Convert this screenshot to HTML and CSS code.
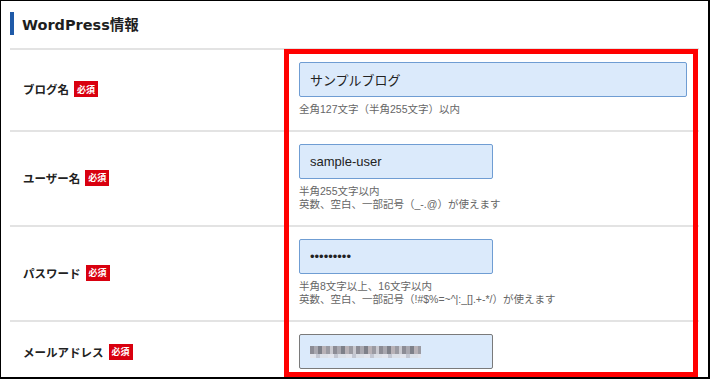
FILE: index.html
```html
<!DOCTYPE html>
<html lang="ja">
<head>
    <meta charset="UTF-8">
    <meta name="viewport" content="width=device-width, initial-scale=1.0">
    <title>WordPress情報</title>
    <link rel="stylesheet" href="styles.css">
</head>
<body>
<div class="frame">
    <div class="section">
        <!-- Heading -->
        <h2 class="section-title"><span class="bar"></span>WordPress情報</h2>

        <!-- Blog name -->
        <div class="row">
            <div class="label">ブログ名<span class="req">必須</span></div>
            <div class="value">
                <input type="text" class="field wide" value="サンプルブログ">
                <p class="hint">全角127文字（半角255文字）以内</p>
            </div>
        </div>

        <!-- User name -->
        <div class="row">
            <div class="label">ユーザー名<span class="req">必須</span></div>
            <div class="value">
                <input type="text" class="field" value="sample-user">
                <p class="hint">半角255文字以内<br>英数、空白、一部記号（_-.@）が使えます</p>
            </div>
        </div>

        <!-- Password -->
        <div class="row">
            <div class="label">パスワード<span class="req">必須</span></div>
            <div class="value">
                <input type="password" class="field" value="samplepw1">
                <p class="hint">半角8文字以上、16文字以内<br>英数、空白、一部記号（!#$%=~^|:_[].+-*/）が使えます</p>
            </div>
        </div>

        <!-- Mail address -->
        <div class="row">
            <div class="label">メールアドレス<span class="req">必須</span></div>
            <div class="value">
                <div class="field blurred"><span class="mosaic"></span></div>
            </div>
        </div>
    </div>

    <!-- Highlight -->
    <div class="highlight"></div>
</div>
</body>
</html>
```

FILE: styles.css
```css
/* General Styles */
* {
    box-sizing: border-box;
}

body {
    margin: 0;
    background: #fff;
    font-family: "Liberation Sans", "Noto Sans CJK JP", sans-serif;
    color: #222;
}

.frame {
    position: relative;
    width: 710px;
    height: 379px;
    border: solid #000;
    border-width: 1px 2px 2px 1px;
    overflow: hidden;
}

.section {
    margin: 11px 9px 0 9px;
}

.section-title {
    display: flex;
    align-items: center;
    gap: 8px;
    margin: 0;
    padding-bottom: 13px;
    border-bottom: 2px solid #e3e3e3;
    font-family: "DejaVu Sans", "Noto Sans CJK JP", sans-serif;
    font-size: 14.5px;
    font-weight: bold;
    color: #1e1e1e;
}

.section-title .bar {
    width: 4px;
    height: 23px;
    background: #1f5aa8;
}

.row {
    display: grid;
    grid-template-columns: 279px 1fr;
    align-items: center;
    padding: 12px 0 14px;
    border-bottom: 2px solid #e3e3e3;
}

.label {
    display: flex;
    align-items: center;
    gap: 5px;
    padding-left: 13px;
    font-family: "Noto Sans CJK JP", sans-serif;
    font-size: 11.5px;
    font-weight: bold;
    color: #222;
}

.req {
    display: inline-flex;
    align-items: center;
    justify-content: center;
    width: 24px;
    height: 16px;
    background: #d9000f;
    color: #fff;
    font-size: 9px;
    font-weight: bold;
}

.value {
    padding-left: 10px;
}

.field {
    display: block;
    width: 194px;
    height: 35px;
    padding: 0 10px;
    margin: 0;
    border: 1px solid #6f9dd3;
    border-radius: 2px;
    background: #dbeafb;
    font-family: "Liberation Sans", "Noto Sans CJK JP", sans-serif;
    font-size: 13px;
    color: #222;
    outline: none;
}

.field.wide {
    width: 388px;
}

.field.blurred {
    display: flex;
    align-items: center;
    border-color: #7a7a7a;
}

.mosaic {
    display: block;
    width: 111px;
    height: 12px;
    background:
        repeating-linear-gradient(90deg, #8c8c95 0 4px, #a9a8b0 4px 8px, #7e8089 8px 12px, #b8b2b7 12px 16px, #9a9aa2 16px 20px, #c9c9d0 20px 23px) top / 100% 8px no-repeat,
        repeating-linear-gradient(90deg, #e1e4ec 0 6px, #c3c7d2 6px 10px, #dbe0e8 10px 18px) bottom / 100% 4px no-repeat;
}

.hint {
    margin: 6px 0 0;
    font-size: 10.5px;
    line-height: 13px;
    color: #666;
}

.highlight {
    position: absolute;
    left: 283px;
    top: 48px;
    width: 414px;
    height: 328px;
    border: 5px solid #ff0000;
    pointer-events: none;
}
```
